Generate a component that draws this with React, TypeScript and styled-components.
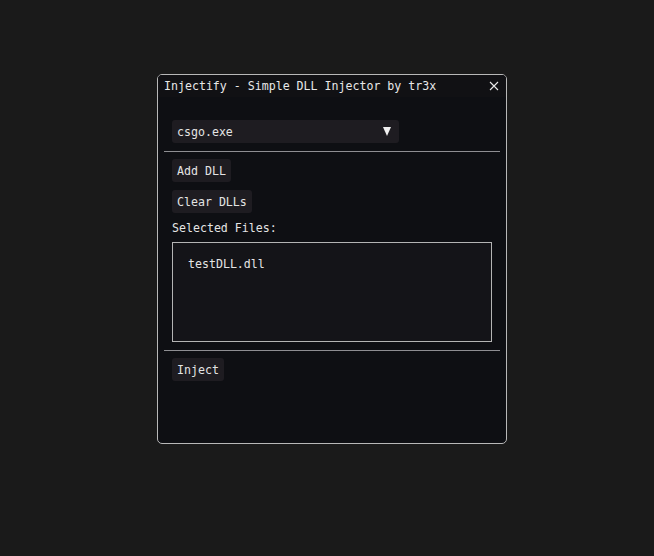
import * as React from 'react';
import styled, { createGlobalStyle } from 'styled-components';

const GlobalStyle = createGlobalStyle`
  html, body {
    margin: 0;
    padding: 0;
    background: #1a1a1a;
  }
  body {
    font-family: "DejaVu Sans Mono", "Liberation Mono", monospace;
    font-size: 11.6px;
    color: #e4e4e4;
  }
`;

const Page = styled.div`
  width: 654px;
  height: 556px;
  padding: 74px 0 0 157px;
  box-sizing: border-box;
`;

const Window = styled.div`
  width: 350px;
  height: 370px;
  box-sizing: border-box;
  border: 1px solid #b8b8b8;
  border-radius: 5px;
  background: #0e0f13;
  display: flex;
  flex-direction: column;
  overflow: hidden;
`;

const TitleBar = styled.div`
  height: 22px;
  display: flex;
  align-items: center;
  justify-content: space-between;
  padding: 0 6px 0 6px;
  background: #111114;
  line-height: 22px;
`;

const Title = styled.span`
  white-space: pre;
  color: #e8e8e8;
`;

const CloseButton = styled.button`
  width: 12px;
  height: 12px;
  padding: 0;
  border: none;
  background: transparent;
  display: flex;
  align-items: center;
  justify-content: center;
  cursor: pointer;
`;

const Body = styled.div`
  display: flex;
  flex-direction: column;
  padding: 23px 6px 0 6px;
`;

const Row = styled.div<{ $top?: number }>`
  display: flex;
  margin: ${(p) => p.$top ?? 0}px 0 0 8px;
`;

const Combo = styled.div`
  width: 227px;
  height: 23px;
  box-sizing: border-box;
  display: flex;
  align-items: center;
  justify-content: space-between;
  padding: 0 8px 0 5px;
  background: #1e1c21;
  border-radius: 3px;
`;

const Separator = styled.hr<{ $top: number }>`
  width: 100%;
  height: 1px;
  border: none;
  margin: ${(p) => p.$top}px 0 7px 0;
  background: #8e8e92;
`;

const Button = styled.button`
  height: 23px;
  padding: 0 5px;
  border: none;
  border-radius: 3px;
  background: #1e1c21;
  color: #e4e4e4;
  font: inherit;
  white-space: pre;
  cursor: pointer;
`;

const Label = styled.div`
  height: 13px;
  line-height: 13px;
  margin: 9px 0 0 8px;
`;

const ListBox = styled.div`
  width: 320px;
  height: 100px;
  box-sizing: border-box;
  margin: 7px 0 0 8px;
  padding: 14px 15px;
  border: 1px solid #b4b4b4;
  background: #141418;
  line-height: 14px;
`;

const Arrow = () => (
  <svg width="8" height="9" viewBox="0 0 8 9">
    <polygon points="0,0 8,0 4,9" fill="#f0f0f0" />
  </svg>
);

const CloseIcon = () => (
  <svg width="10" height="10" viewBox="0 0 10 10">
    <path d="M1 1 L9 9 M9 1 L1 9" stroke="#e8e8e8" strokeWidth="1.1" />
  </svg>
);

export default function App() {
  const [files] = React.useState(['testDLL.dll']);

  return (
    <Page>
      <GlobalStyle />
      <Window>
        <TitleBar>
          <Title>Injectify - Simple DLL Injector by tr3x</Title>
          <CloseButton>
            <CloseIcon />
          </CloseButton>
        </TitleBar>
        <Body>
          <Row>
            <Combo>
              <span>csgo.exe</span>
              <Arrow />
            </Combo>
          </Row>
          <Separator $top={8} />
          <Row>
            <Button>Add DLL</Button>
          </Row>
          <Row $top={8}>
            <Button>Clear DLLs</Button>
          </Row>
          <Label>Selected Files:</Label>
          <ListBox>
            {files.map((f) => (
              <div key={f}>{f}</div>
            ))}
          </ListBox>
          <Separator $top={8} />
          <Row>
            <Button>Inject</Button>
          </Row>
        </Body>
      </Window>
    </Page>
  );
}
